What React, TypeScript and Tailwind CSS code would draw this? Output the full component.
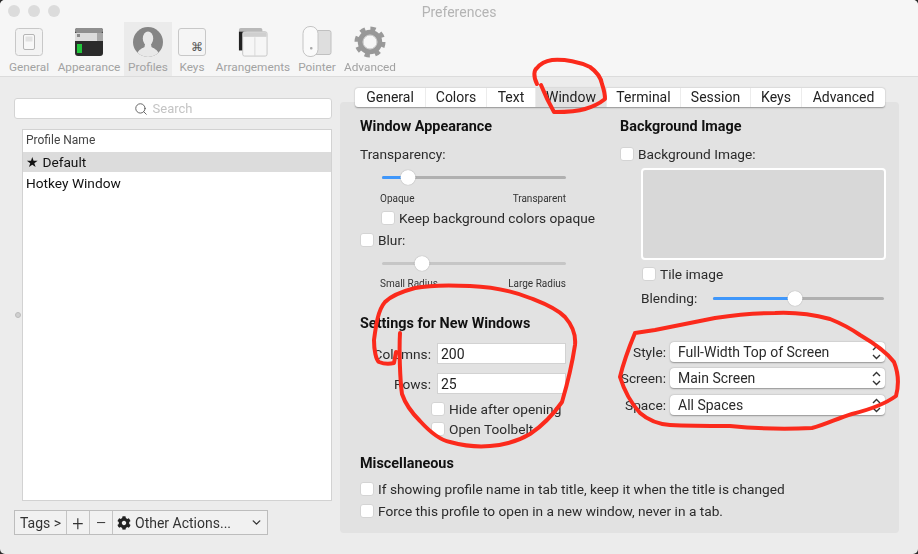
import React from 'react';
import { Search, ChevronDown } from 'lucide-react';
import { FaCog } from 'react-icons/fa';

const GeneralIcon = () => (
  <svg width="30" height="30" viewBox="0 0 30 30">
    <rect x="1.5" y="1.5" width="27" height="27" rx="3" fill="#f3f3f3" stroke="#c8c8c8" />
    <rect x="9.5" y="7.5" width="11" height="15" rx="1.5" fill="#f8f8f8" stroke="#b5b5b5" />
    <rect x="11.5" y="9.5" width="7" height="5" fill="#e2e2e2" />
  </svg>
);

const AppearanceIcon = () => (
  <svg width="30" height="30" viewBox="0 0 30 30">
    <rect x="1" y="1" width="28" height="28" rx="3" fill="#2b2b2b" />
    <rect x="1" y="1" width="28" height="5" rx="2" fill="#8f8f8f" />
    <rect x="1" y="6" width="22" height="8" fill="#dcdcdc" />
    <rect x="23" y="6" width="6" height="8" fill="#a8a8a8" />
    <rect x="3" y="7" width="3" height="3" fill="#888" />
    <rect x="3" y="17" width="5" height="9" fill="#22c63c" />
  </svg>
);

const ProfileIcon = () => (
  <svg width="32" height="32" viewBox="0 0 32 32">
    <defs>
      <clipPath id="profile-clip">
        <circle cx="16" cy="16" r="15" />
      </clipPath>
    </defs>
    <circle cx="16" cy="16" r="15" fill="#858585" />
    <g clipPath="url(#profile-clip)" fill="#e8e8e8">
      <ellipse cx="16" cy="12.5" rx="5.2" ry="7" />
      <path d="M13 18 L19 18 L19.5 21 C23 23 27 24 28 32 L4 32 C5 24 9 23 12.5 21 Z" />
    </g>
  </svg>
);

const KeysIcon = () => (
  <div className="relative h-[28px] w-[28px] rounded-[3px] border border-[#c8c8c8] bg-[#f5f5f5]">
    <span className="absolute right-[2px] bottom-[1px] text-[12px] leading-[14px] text-[#555]">⌘</span>
  </div>
);

const ArrangementsIcon = () => (
  <svg width="30" height="30" viewBox="0 0 32 32">
    <rect x="1" y="1" width="25" height="23" rx="2" fill="#b9b9b9" />
    <rect x="1" y="5" width="8" height="20" fill="#222" />
    <rect x="5" y="5" width="26" height="26" rx="2" fill="#f6f6f6" stroke="#c4c4c4" />
    <rect x="5.5" y="5.5" width="25" height="5" fill="#cfcfcf" />
    <line x1="18" y1="11" x2="18" y2="31" stroke="#d8d8d8" />
  </svg>
);

const PointerIcon = () => (
  <svg width="30" height="32" viewBox="0 0 30 32">
    <rect x="12" y="4.5" width="17" height="24" rx="2" fill="#dedede" stroke="#c0c0c0" />
    <rect x="1" y="0.5" width="15" height="30" rx="7" fill="#fafafa" stroke="#c4c4c4" />
    <rect x="8" y="21" width="2.5" height="2.5" rx="1" fill="#aaa" />
  </svg>
);

const GearIcon = () => (
  <svg width="32" height="32" viewBox="0 0 32 32">
    <circle cx="16" cy="16" r="13" fill="none" stroke="#9a9a9a" strokeWidth="5" strokeDasharray="5.1 5.11" />
    <circle cx="16" cy="16" r="9.5" fill="none" stroke="#989898" strokeWidth="5.5" />
    <circle cx="16" cy="16" r="7" fill="none" stroke="#d4d4d4" strokeWidth="1" />
  </svg>
);

const toolbarItems = [
  { label: 'General', icon: <GeneralIcon />, width: 'w-[58px]' },
  { label: 'Appearance', icon: <AppearanceIcon />, width: 'w-[62px] mr-[4px]' },
  { label: 'Profiles', icon: <ProfileIcon />, width: 'w-[48px]', active: true },
  { label: 'Keys', icon: <KeysIcon />, width: 'w-[40px]' },
  { label: 'Arrangements', icon: <ArrangementsIcon />, width: 'w-[82px]' },
  { label: 'Pointer', icon: <PointerIcon />, width: 'w-[46px]' },
  { label: 'Advanced', icon: <GearIcon />, width: 'w-[60px]' },
];

const tabs = [
  { label: 'General', width: 'w-[71px]' },
  { label: 'Colors', width: 'w-[61px]' },
  { label: 'Text', width: 'w-[49px]' },
  { label: 'Window', width: 'w-[71px]', active: true },
  { label: 'Terminal', width: 'w-[74px]' },
  { label: 'Session', width: 'w-[70px]' },
  { label: 'Keys', width: 'w-[51px]' },
  { label: 'Advanced', width: 'w-[83px]' },
];

const Check = () => (
  <span className="h-[14px] w-[14px] shrink-0 rounded-[3px] border border-[#d4d4d4] bg-white" />
);

const CheckRow = ({ label, className = '' }: { label: string; className?: string }) => (
  <div className={`flex h-[16px] items-center gap-[4px] ${className}`}>
    <Check />
    <span className="whitespace-nowrap">{label}</span>
  </div>
);

const Heading = ({ children, className = '' }: { children: React.ReactNode; className?: string }) => (
  <div className={`h-[16px] text-[14.4px] leading-[18px] font-bold text-[#111] ${className}`}>{children}</div>
);

const Slider = ({ fill, disabled, className = '' }: { fill: number; disabled?: boolean; className?: string }) => (
  <div className={`relative h-[16px] ${className}`}>
    <div className={`absolute top-[6.5px] right-0 left-0 h-[3px] rounded-full ${disabled ? 'bg-[#c6c6c6]' : 'bg-[#b0b0b0]'}`} />
    {!disabled && (
      <div className="absolute top-[6.5px] left-0 h-[3px] rounded-full bg-[#3f97fb]" style={{ width: fill }} />
    )}
    <div
      className="absolute top-[0.5px] h-[15px] w-[15px] -translate-x-1/2 rounded-full bg-white shadow-[0_0_1px_rgba(0,0,0,0.4)]"
      style={{ left: fill }}
    />
  </div>
);

const SliderLabels = ({ left, right, className = '' }: { left: string; right: string; className?: string }) => (
  <div className={`ml-[20px] flex h-[12px] w-[186px] justify-between text-[10px] leading-[14px] text-[#333] ${className}`}>
    <span>{left}</span>
    <span>{right}</span>
  </div>
);

const NumberField = ({ label, value, className = '' }: { label: string; value: string; className?: string }) => (
  <div className={`flex h-[21px] items-center ${className}`}>
    <span className="w-[70px] pr-[6px] text-right">{label}</span>
    <div className="flex h-[21px] w-[129px] items-center border border-[#d2d2d2] bg-white pl-[3px] text-[14px] text-[#222]">{value}</div>
  </div>
);

const SelectField = ({ label, value, className = '' }: { label: string; value: string; className?: string }) => (
  <div className={`flex h-[20px] items-center ${className}`}>
    <span className="w-[46px] text-right">{label}</span>
    <div className="ml-[4px] flex h-[20px] w-[215px] items-center justify-between rounded-[4px] bg-white pr-[4px] pl-[8px] text-[14px] shadow-[0_0.5px_1.5px_rgba(0,0,0,0.35)]">
      <span>{value}</span>
      <svg width="9" height="15" viewBox="0 0 9 15" fill="none" stroke="#333" strokeWidth="1.4">
        <path d="M1 5 L4.5 1.5 L8 5" />
        <path d="M1 10 L4.5 13.5 L8 10" />
      </svg>
    </div>
  </div>
);

export default function App() {
  return (
    <div className="h-[554px] w-[918px] overflow-hidden bg-[#2a2a2a] font-['Roboto',Arial,sans-serif] text-[13.7px] leading-[16px] text-[#2b2b2b]">
      <div className="relative flex h-full flex-col rounded-t-[5px] rounded-b-[5px] bg-[#ececec] blur-[0.3px]">
        <header className="h-[77px] shrink-0 rounded-t-[5px] border-b border-[#dcdcdc] bg-[#f6f6f6]">
          <div className="relative flex h-[22px] items-center pl-[8px]">
            <div className="flex gap-[8px]">
              <span className="h-[12px] w-[12px] rounded-full bg-[#dcdcdc]" />
              <span className="h-[12px] w-[12px] rounded-full bg-[#dcdcdc]" />
              <span className="h-[12px] w-[12px] rounded-full bg-[#dcdcdc]" />
            </div>
            <span className="absolute inset-x-0 top-[4px] text-center text-[14px] text-[#b4b4b4]">Preferences</span>
          </div>
          <nav className="flex h-[54px]">
            {toolbarItems.map((item) => (
              <div
                key={item.label}
                className={`flex flex-col items-center ${item.width} ${item.active ? 'bg-[#ebebeb]' : ''}`}
              >
                <div className="flex h-[36px] items-center pt-[3px]">{item.icon}</div>
                <span className="mt-[2px] whitespace-nowrap text-[11.8px] leading-[14px] text-[#a2a2a2]">{item.label}</span>
              </div>
            ))}
          </nav>
        </header>

        <div className="flex min-h-0 flex-1">
          <aside className="w-[340px] shrink-0 pt-[21px] pl-[14px]">
            <div className="flex h-[21px] w-[318px] items-center justify-center gap-[5px] rounded-[3px] border border-[#d4d4d4] bg-white pr-[20px] text-[13px] text-[#c4c4c4]">
              <Search size={14} strokeWidth={1.5} className="text-[#555]" />
              <span>Search</span>
            </div>
            <div className="mt-[10px] ml-[8px] h-[372px] w-[310px] border border-[#d2d2d2] bg-white">
              <div className="flex h-[22px] items-center pb-[2px] pl-[3px] text-[12px] text-[#444]">Profile Name</div>
              <div className="flex h-[20px] items-center bg-[#dcdcdc] pl-[3px] text-[#111]">★ Default</div>
              <div className="flex h-[22px] items-center pl-[3px] text-[#111]">Hotkey Window</div>
            </div>
            <div className="mt-[9px] flex h-[25px] w-[254px] border border-[#bdbdbd] bg-[#f1f1f1] text-[#333]">
              <div className="flex w-[52px] items-center justify-center border-r border-[#c4c4c4] text-[14px]">Tags &gt;</div>
              <div className="flex w-[23px] items-center justify-center border-r border-[#c4c4c4] text-[20px] font-light">+</div>
              <div className="flex w-[23px] items-center justify-center border-r border-[#c4c4c4] text-[20px] font-light">−</div>
              <div className="flex flex-1 items-center px-[4px] text-[14px]">
                <FaCog size={14} className="text-[#222]" />
                <span className="ml-[4px]">Other Actions...</span>
                <ChevronDown size={13} strokeWidth={2.5} className="ml-auto" />
              </div>
            </div>
          </aside>

          <main className="mt-[25px] h-[431px] w-[559px] rounded-[4px] bg-[#e2e2e2]">
            <div className="-mt-[14px] ml-[15px] flex h-[19px] w-[530px] rounded-[3px] bg-white text-[14px] text-[#222] shadow-[0_0.5px_1.5px_rgba(0,0,0,0.35)]">
              {tabs.map((tab) => (
                <div
                  key={tab.label}
                  className={`flex items-center justify-center border-r border-[#ececec] pb-[1px] last:border-r-0 ${tab.width} ${tab.active ? 'bg-[#e2e2e2]' : ''}`}
                >
                  {tab.label}
                </div>
              ))}
            </div>

            <div className="pl-[20px]">
              <div className="flex">
                <section className="w-[260px]">
                  <Heading className="mt-[11px]">Window Appearance</Heading>
                  <div className="mt-[12px] h-[16px]">Transparency:</div>
                  <Slider fill={26} className="mt-[7px] ml-[22px] w-[184px]" />
                  <SliderLabels left="Opaque" right="Transparent" className="mt-[7px]" />
                  <CheckRow label="Keep background colors opaque" className="mt-[6px] ml-[21px]" />
                  <CheckRow label="Blur:" className="mt-[6px]" />
                  <Slider fill={40} disabled className="mt-[7px] ml-[22px] w-[184px]" />
                  <SliderLabels left="Small Radius" right="Large Radius" className="mt-[6px]" />
                  <Heading className="mt-[26px]">Settings for New Windows</Heading>
                  <NumberField label="Columns:" value="200" className="mt-[12px] ml-[7px]" />
                  <NumberField label="Rows:" value="25" className="mt-[9px] ml-[7px]" />
                  <CheckRow label="Hide after opening" className="mt-[7px] ml-[71px]" />
                  <CheckRow label="Open Toolbelt" className="mt-[4px] ml-[71px]" />
                </section>

                <section className="w-[270px]">
                  <Heading className="mt-[11px]">Background Image</Heading>
                  <CheckRow label="Background Image:" className="mt-[12px]" />
                  <div className="mt-[6px] ml-[21px] h-[92px] w-[245px] rounded-[4px] border-2 border-white bg-[#d8d8d8]" />
                  <CheckRow label="Tile image" className="mt-[6px] ml-[22px]" />
                  <div className="mt-[8px] ml-[21px] flex h-[16px] items-center">
                    <span className="w-[72px]">Blending:</span>
                    <Slider fill={82} className="w-[171px]" />
                  </div>
                  <SelectField label="Style:" value="Full-Width Top of Screen" className="mt-[36px]" />
                  <SelectField label="Screen:" value="Main Screen" className="mt-[6px]" />
                  <SelectField label="Space:" value="All Spaces" className="mt-[7px]" />
                </section>
              </div>

              <Heading className="mt-[18px]">Miscellaneous</Heading>
              <CheckRow label="If showing profile name in tab title, keep it when the title is changed" className="mt-[10px]" />
              <CheckRow label="Force this profile to open in a new window, never in a tab." className="mt-[6px]" />
            </div>
          </main>
        </div>

        {/* pane resize handle */}
        <span className="absolute top-[312px] left-[15px] h-[6px] w-[6px] rounded-full border border-[#bbb] bg-[#d0d0d0]" />

        {/* red pen marks drawn on the screenshot */}
        <svg className="pointer-events-none absolute top-0 left-0" width="918" height="554" fill="none" stroke="#fb2a1c" strokeWidth="4" strokeLinecap="round" strokeLinejoin="round">
          <path d="M537 84 C533 76 534 70 537 68 C541 63 546 61 552 60 C565 59 580 62 590 67 C597 72 601 78 602 84 C604 90 605 95 605 99 C600 103 592 107 585 109 C576 112 564 112 554 112 C550 105 545 95 541 85" />
          <path d="M400 333 C399 350 400 380 402 394 C406 406 414 415 420 421 C430 432 440 440 450 442 C465 446 480 447 490 446 C505 445 520 440 530 434 C545 424 555 412 562 402 C567 385 572 365 575 345 C576 335 572 325 565 317 C555 307 540 302 530 298 C515 292 495 287 470 286 C450 285 430 285 415 288 C400 292 390 297 385 302 C378 310 376 325 374 340 C374 350 376 360 379 362 C384 364 390 364 394 363 L396 352" />
          <path d="M635 333 C630 345 624 360 620 377 C624 390 630 402 640 413 C648 420 656 424 670 425 C690 426 710 426 730 426 C750 428 775 430 812 428 C825 425 838 418 852 414 C868 410 885 404 896 396 C899 385 898 372 894 362 C885 350 872 342 860 335 C850 328 840 323 830 319 C815 315 795 312 775 313 C755 313 735 315 715 318 C695 322 675 326 655 330 L635 333" />
        </svg>
      </div>
    </div>
  );
}
